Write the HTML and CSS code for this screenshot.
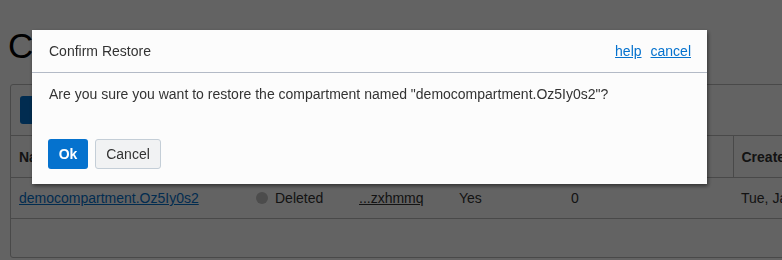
FILE: index.html
```html
<!DOCTYPE html>
<html>
<head>
  <meta charset="UTF-8">
  <title>Compartments</title>
  <link rel="stylesheet" href="styles.css">
</head>
<body>
  <div class="page">
    <h1 class="title">Compartments</h1>
    <div class="card">
      <div class="toolbar">
        <button class="btn-create">Create Compartment</button>
      </div>
      <table class="grid">
        <colgroup>
          <col style="width: 240px">
          <col style="width: 100px">
          <col style="width: 100px">
          <col style="width: 112px">
          <col style="width: 170px">
          <col style="width: 160px">
        </colgroup>
        <thead>
          <tr>
            <th>Name</th>
            <th>Status</th>
            <th>OCID</th>
            <th>Authorized</th>
            <th>Subcompartments</th>
            <th>Created</th>
          </tr>
        </thead>
        <tbody>
          <tr>
            <td><a href="#">democompartment.Oz5Iy0s2</a></td>
            <td><span class="dot"></span>Deleted</td>
            <td><a href="#" class="ocid">...zxhmmq</a></td>
            <td>Yes</td>
            <td class="num">0</td>
            <td>Tue, Jan 8, 2019</td>
          </tr>
        </tbody>
      </table>
    </div>
  </div>

  <div class="overlay"></div>

  <div class="dialog">
    <div class="dialog-head">
      <span class="dialog-title">Confirm Restore</span>
      <span class="dialog-links"><a href="#">help</a><a href="#">cancel</a></span>
    </div>
    <div class="dialog-body">
      Are you sure you want to restore the compartment named "democompartment.Oz5Iy0s2"?
    </div>
    <div class="dialog-foot">
      <button class="btn-ok">Ok</button>
      <button class="btn-cancel">Cancel</button>
    </div>
  </div>
</body>
</html>
```

FILE: styles.css
```css
body {
  font-family: "Liberation Sans", Arial, sans-serif;
  margin: 0;
  width: 782px;
  height: 260px;
  overflow: hidden;
  background: #fff;
  color: #333;
}

.page {
  padding: 0 0 0 10px;
  width: 1000px;
}

.title {
  font-size: 35px;
  font-weight: 300;
  color: #000;
  margin: 0 0 0 -2px;
  padding: 28px 0 0 0;
  height: 84px;
  box-sizing: border-box;
  line-height: 1;
}

.card {
  border: 1px solid #bbb;
  border-radius: 3px;
  height: 172px;
  overflow: hidden;
}

.toolbar {
  padding: 11px 9px 0;
  height: 50px;
  box-sizing: border-box;
}

.btn-create {
  background: #0572ce;
  color: #fff;
  border: none;
  border-radius: 3px;
  height: 28px;
  padding: 0 12px;
  font-family: inherit;
  font-size: 14px;
  font-weight: bold;
}

.grid {
  border-collapse: collapse;
  table-layout: fixed;
  width: 882px;
  font-size: 14px;
  white-space: nowrap;
}

.grid th {
  text-align: left;
  font-weight: bold;
  color: #333;
  height: 41px;
  padding: 0 8px;
  border-top: 1px solid #bbb;
  border-bottom: 1px solid #bbb;
  border-right: 1px solid #bbb;
}

.grid td {
  height: 40px;
  padding: 0 8px;
  border-bottom: 1px solid #bbb;
  color: #333;
}

.grid a {
  color: #0572ce;
}

.grid a.ocid {
  color: #333;
}

.num {
  padding-left: 8px;
}

.dot {
  display: inline-block;
  width: 12px;
  height: 12px;
  border-radius: 50%;
  background: #c4c4c4;
  vertical-align: -1px;
  margin: 0 7px 0 -3px;
}

.overlay {
  position: fixed;
  inset: 0;
  background: rgba(0, 0, 0, 0.61);
}

.dialog {
  position: fixed;
  left: 32px;
  top: 30px;
  width: 675px;
  height: 154px;
  background: #fcfcfc;
  box-shadow: 1px 2px 4px rgba(0, 0, 0, 0.5);
  font-size: 14px;
  color: #333;
}

.dialog-head {
  display: flex;
  justify-content: space-between;
  align-items: center;
  height: 42px;
  padding: 0 16px 0 17px;
  border-bottom: 1px solid #b3bac6;
}

.dialog-links a {
  color: #0572ce;
  margin-left: 9px;
}

.dialog-body {
  padding: 13px 17px 0;
  height: 53px;
}

.dialog-foot {
  display: flex;
  gap: 7px;
  padding: 0 16px;
}

.btn-ok,
.btn-cancel {
  height: 30px;
  font-family: inherit;
  font-size: 14px;
  border-radius: 3px;
  box-sizing: border-box;
}

.btn-ok {
  background: #0572ce;
  color: #fff;
  font-weight: bold;
  border: none;
  width: 40px;
}

.btn-cancel {
  background: #f1f2f3;
  color: #333;
  border: 1px solid #c4ced7;
  width: 66px;
}
```
